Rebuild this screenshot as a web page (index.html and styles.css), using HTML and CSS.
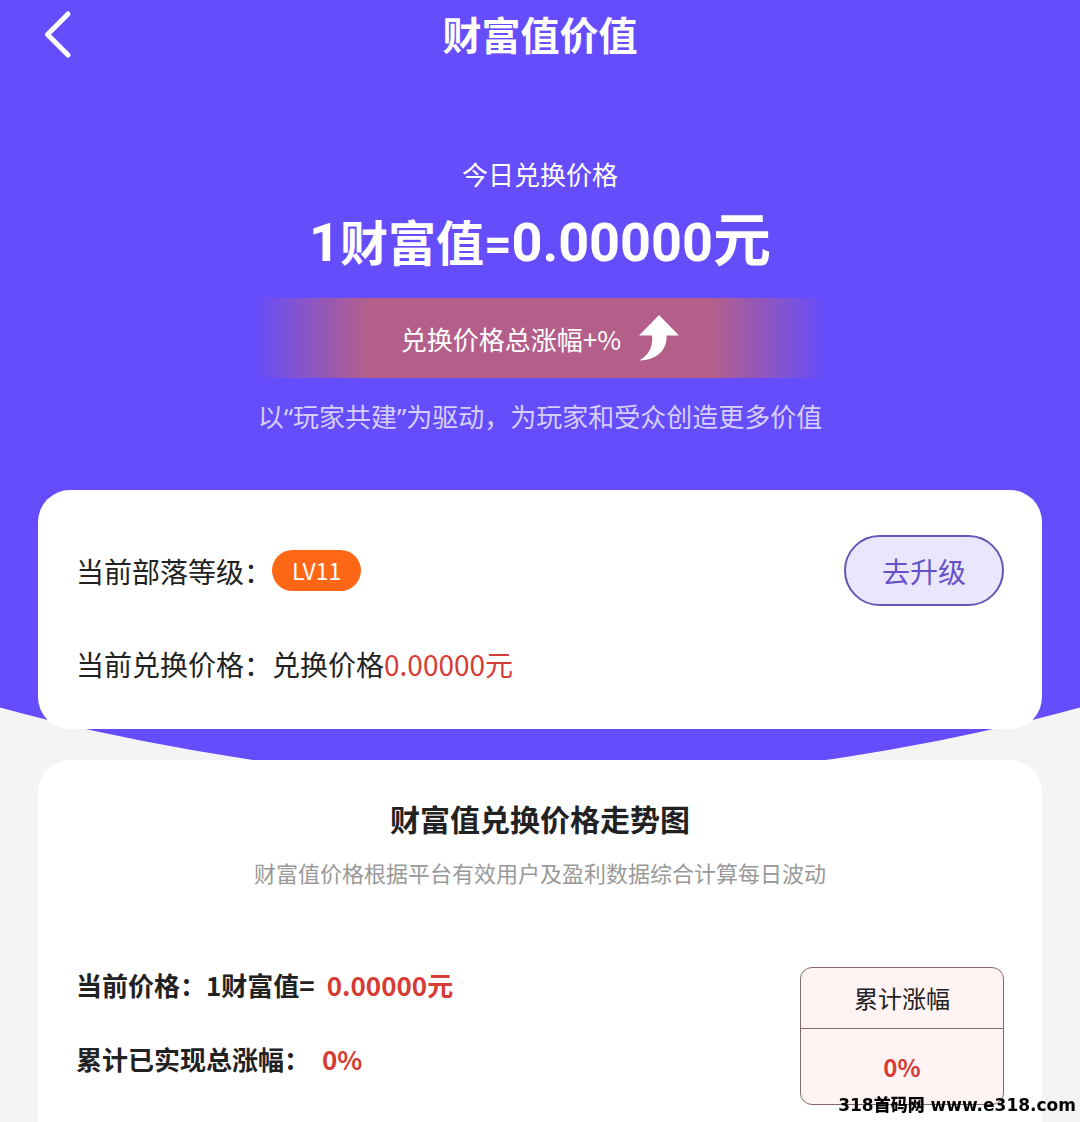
FILE: index.html
```html
<!DOCTYPE html>
<html lang="zh">
<head>
    <meta charset="UTF-8">
    <meta name="viewport" content="width=device-width, initial-scale=1.0">
    <title>财富值价值</title>
    <link rel="stylesheet" href="styles.css">
</head>
<body>

    <div class="page">
        <header class="navbar">
            <button class="back" type="button" aria-label="返回">
                <svg width="30" height="50" viewBox="0 0 30 50" fill="none" stroke="#fff" stroke-width="5" stroke-linecap="round" stroke-linejoin="round">
                    <path d="M26 4L5.500 24.500L26 45"/>
                </svg>
            </button>
            <h1>财富值价值</h1>
        </header>

        <section class="hero">
            <p class="hero-label">今日兑换价格</p>
            <p class="hero-price"><span class="num">1</span>财富值<span class="equal">=</span><span class="num">0.00000</span><span class="unit">元</span></p>
            <div class="rise">
                <span>兑换价格总涨幅+%</span>
                <svg width="40" height="46" viewBox="0 0 40 46" fill="#fff">
                    <path d="M20 0L40 20.500H27.500C28.500 32 21 45 0 45.500C8.500 41 14.500 33 13 20.500H0Z"/>
                </svg>
            </div>
            <p class="hero-slogan">以“玩家共建”为驱动，为玩家和受众创造更多价值</p>
        </section>

        <section class="card level">
            <div class="level-row">
                <span>当前部落等级：</span>
                <span class="tag">LV11</span>
                <button class="upgrade" type="button">去升级</button>
            </div>
            <div class="level-row">
                <span>当前兑换价格：</span>
                <span>兑换价格<span class="red">0.00000元</span></span>
            </div>
        </section>

        <section class="card trend">
            <h2>财富值兑换价格走势图</h2>
            <p class="trend-desc">财富值价格根据平台有效用户及盈利数据综合计算每日波动</p>
            <div class="trend-body">
                <div class="trend-info">
                    <p>当前价格：1财富值=<span class="red price">0.00000元</span></p>
                    <p>累计已实现总涨幅：<span class="red total">0%</span></p>
                </div>
                <div class="trend-box">
                    <div class="box-title">累计涨幅</div>
                    <div class="box-value red">0%</div>
                </div>
            </div>
        </section>
    </div>

    <div class="watermark">318首码网 www.e318.com</div>

</body>
</html>
```

FILE: styles.css
```css
* {
    box-sizing: border-box;
}

body {
    margin: 0;
    font-family: "Noto Sans CJK SC", sans-serif;
    color: #222;
    background: #f4f4f4;
}

h1, h2, p {
    margin: 0;
}

button {
    font-family: inherit;
    cursor: pointer;
}

.page {
    position: relative;
    display: flex;
    flex-direction: column;
    min-height: 100vh;
    padding: 0 38px;
    overflow: hidden;
}

/* 紫色弧形背景 */
.page::before {
    content: "";
    position: absolute;
    top: 0;
    left: 0;
    width: 100%;
    height: 780px;
    background: #664dfb;
    clip-path: ellipse(189% 2038px at 50% calc(100% - 2038px));
    z-index: -1;
}

.navbar {
    display: grid;
    grid-template-columns: 40px 1fr 40px;
    align-items: start;
    height: 70px;
    color: #fff;
}

.back {
    display: flex;
    padding: 10px 4px;
    border: none;
    background: none;
}

h1 {
    font-size: 39px;
    line-height: 66px;
    font-weight: 700;
    text-align: center;
}

.hero {
    display: flex;
    flex-direction: column;
    align-items: center;
    padding: 86px 0 54px;
    color: #fff;
}

.hero-label {
    font-size: 26px;
    line-height: 36px;
}

.hero-price {
    display: flex;
    align-items: baseline;
    height: 98px;
    font-size: 48px;
    line-height: 88px;
    font-weight: 700;
}

.num {
    font-family: Roboto, sans-serif;
    font-size: 54px;
}

.equal {
    font-family: Roboto, sans-serif;
}

.unit {
    font-size: 58px;
}

.rise {
    display: flex;
    align-items: center;
    justify-content: center;
    gap: 18px;
    width: 570px;
    max-width: 100%;
    height: 80px;
    margin-top: 8px;
    font-size: 26px;
    background: linear-gradient(to right, rgba(180, 95, 138, 0), #b45f8a 20%, #b45f8a 80%, rgba(180, 95, 138, 0));
}

.hero-slogan {
    margin-top: 20px;
    font-family: "Noto Sans", "Noto Sans CJK SC", sans-serif;
    font-size: 26px;
    line-height: 38px;
    color: #d6cffd;
}

.card {
    background: #fff;
    border-radius: 32px;
    padding: 0 38px;
}

.level {
    padding-top: 45px;
    padding-bottom: 30px;
    font-size: 28px;
}

.level-row {
    display: flex;
    align-items: center;
    height: 71px;
}

.level-row + .level-row {
    margin-top: 22px;
}

.tag {
    padding: 0 20px;
    border-radius: 21px;
    background: #ff6716;
    color: #fff;
    font-size: 23px;
    line-height: 41px;
}

.upgrade {
    width: 160px;
    height: 71px;
    margin-left: auto;
    border: 2px solid #6656b4;
    border-radius: 36px;
    background: #eae6fe;
    color: #6650c8;
    font-size: 28px;
}

.red {
    color: #d63c35;
}

.trend {
    flex: 1;
    margin-top: 31px;
    padding-bottom: 18px;
    border-radius: 32px 32px 0 0;
}

h2 {
    margin-top: 36px;
    font-size: 30px;
    line-height: 44px;
    font-weight: 700;
    text-align: center;
}

.trend-desc {
    margin-top: 16px;
    font-size: 22px;
    line-height: 32px;
    text-align: center;
    color: #999;
}

.trend-body {
    display: flex;
    justify-content: space-between;
    margin-top: 79px;
}

.trend-info {
    font-size: 26px;
    line-height: 36px;
    font-weight: 700;
}

.trend-info p + p {
    margin-top: 38px;
}

.price {
    margin-left: 12px;
}

.total {
    margin-left: 12px;
}

.trend-box {
    width: 204px;
    border: 1px solid #85686b;
    border-radius: 12px;
    background: #fff3f3;
    font-size: 24px;
    text-align: center;
}

.box-title {
    line-height: 60px;
    border-bottom: 1px solid #85686b;
}

.box-value {
    line-height: 75px;
    font-weight: 700;
}

/* 右下角水印 */
.watermark {
    position: fixed;
    right: 4px;
    bottom: 4px;
    font-family: "DejaVu Sans", "Noto Sans CJK SC", sans-serif;
    font-size: 17px;
    line-height: 26px;
    font-weight: 900;
    color: #000;
}
```
